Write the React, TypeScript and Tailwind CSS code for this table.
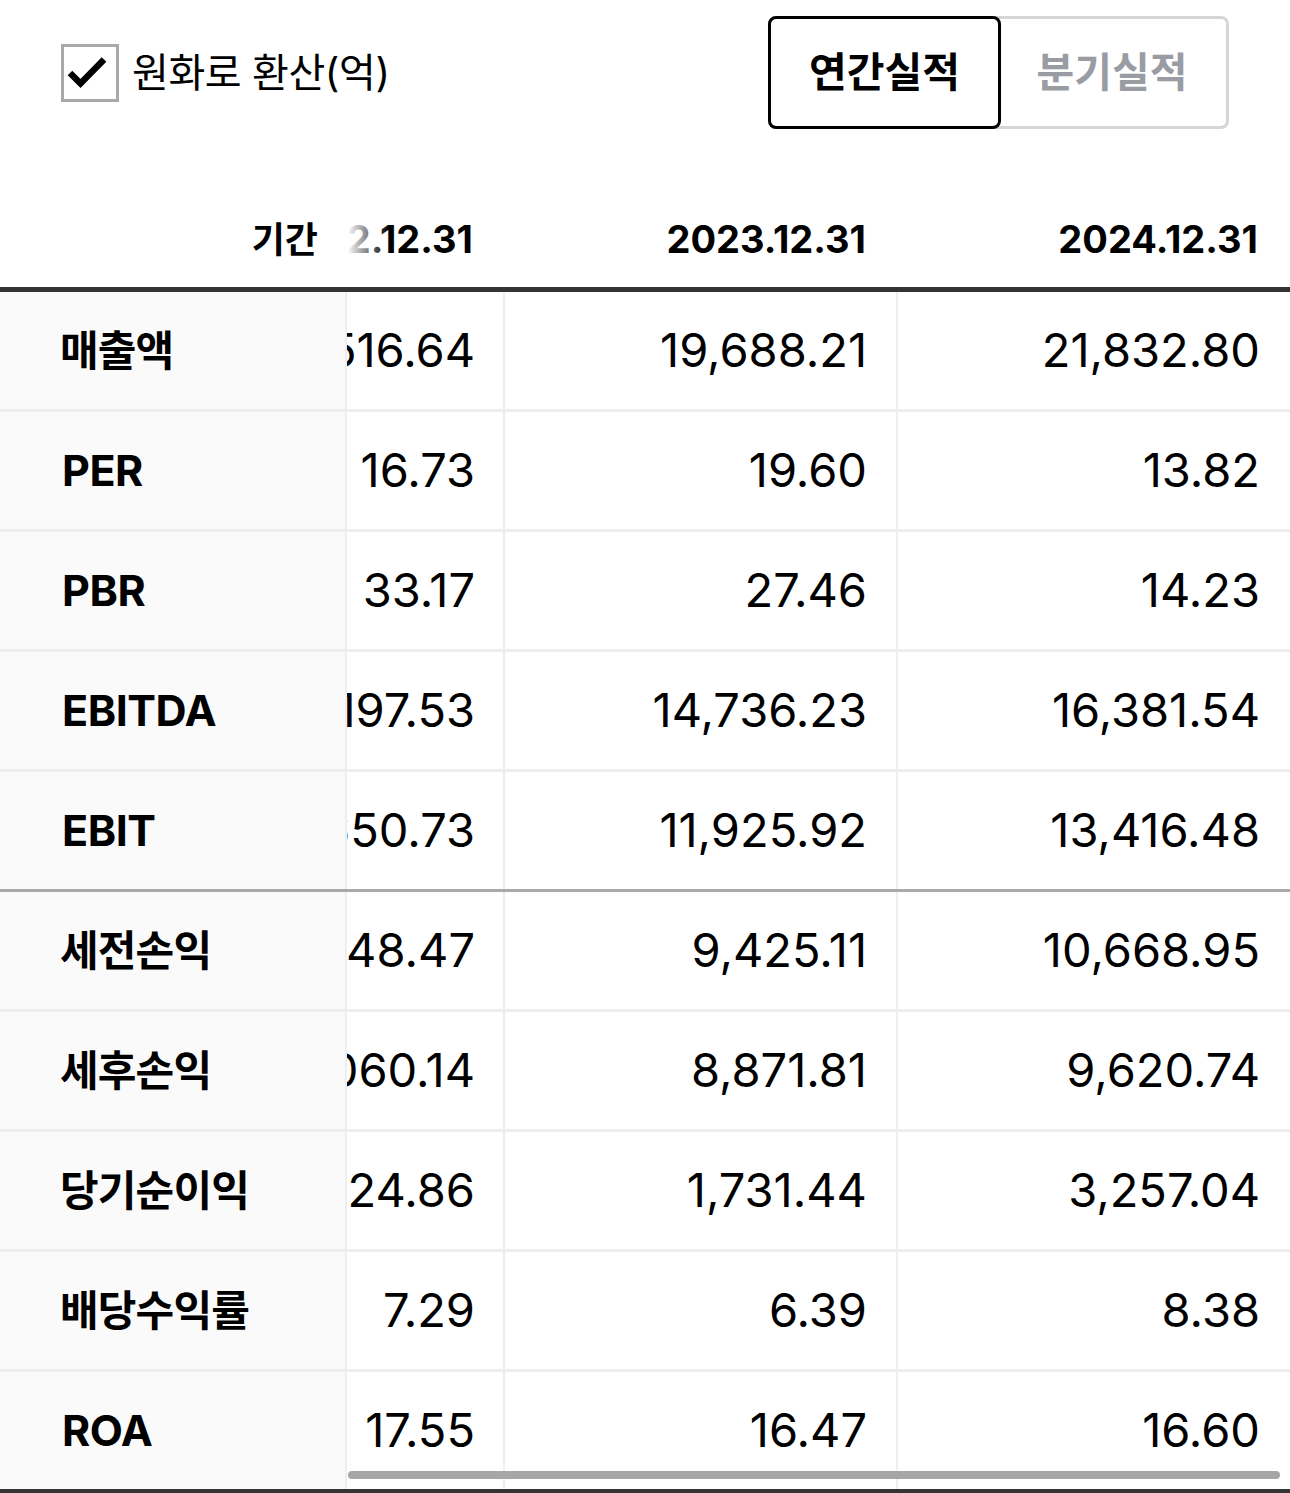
import { useState } from 'react';

const periods = ['2022.12.31', '2023.12.31', '2024.12.31'];

const rows = [
  { label: '매출액', values: ['18,516.64', '19,688.21', '21,832.80'] },
  { label: 'PER', values: ['16.73', '19.60', '13.82'] },
  { label: 'PBR', values: ['33.17', '27.46', '14.23'] },
  { label: 'EBITDA', values: ['13,197.53', '14,736.23', '16,381.54'] },
  { label: 'EBIT', values: ['10,650.73', '11,925.92', '13,416.48'] },
  { label: '세전손익', values: ['8,448.47', '9,425.11', '10,668.95'] },
  { label: '세후손익', values: ['8,060.14', '8,871.81', '9,620.74'] },
  { label: '당기순이익', values: ['1,224.86', '1,731.44', '3,257.04'] },
  { label: '배당수익률', values: ['7.29', '6.39', '8.38'] },
  { label: 'ROA', values: ['17.55', '16.47', '16.60'] },
];

const font = { fontFamily: 'Inter, "Noto Sans CJK KR", sans-serif' };

const valueCell = [
  'flex items-center justify-end overflow-hidden border-r-2 border-[#eeeeee] pr-[28px] text-[47px]',
  'flex items-center justify-end overflow-hidden border-r-2 border-[#eeeeee] pr-[29px] text-[47px]',
  'flex items-center justify-end overflow-hidden pr-[30px] text-[47px]',
];

export default function App() {
  const [krw, setKrw] = useState(true);
  const [mode, setMode] = useState<'year' | 'quarter'>('year');

  return (
    <div className="w-[1290px] bg-white text-black" style={font}>
      {/* Top controls */}
      <div className="flex items-center justify-between pt-4 pl-[61px] pr-[61px]">
        <label className="flex items-center gap-[13px] cursor-pointer" onClick={() => setKrw(!krw)}>
          <span className="flex h-[58px] w-[58px] items-center justify-center border-[3px] border-[#a9a9a9] bg-white">
            {krw && (
              <svg width="52" height="52" viewBox="0 0 52 52">
                <path d="M6 26 L16.5 36.5 L40 12.5" fill="none" stroke="#000" strokeWidth="6.5" />
              </svg>
            )}
          </span>
          <span className="text-[40px] leading-none tracking-[-0.01em]">원화로 환산(억)</span>
        </label>

        <div className="flex h-[113px] w-[461px] rounded-lg border-[3px] border-[#d6d6da]">
          <button
            onClick={() => setMode('year')}
            className={
              mode === 'year'
                ? '-m-[3px] flex w-[233px] items-center justify-center rounded-lg border-[3px] border-black text-[41px] font-semibold text-black'
                : 'flex w-[230px] items-center justify-center text-[41px] font-semibold text-[#9a9ca3]'
            }
          >
            연간실적
          </button>
          <button
            onClick={() => setMode('quarter')}
            className={
              mode === 'quarter'
                ? '-m-[3px] flex w-[233px] items-center justify-center rounded-lg border-[3px] border-black text-[41px] font-semibold text-black'
                : 'flex flex-1 items-center justify-center text-[41px] font-semibold text-[#9a9ca3]'
            }
          >
            분기실적
          </button>
        </div>
      </div>

      {/* Table */}
      <div className="relative mt-[58px]">
        <div className="grid h-[105px] grid-cols-[347px_158px_393px_392px] border-b-[5px] border-[#333333] pt-[5px]">
          <div className="flex items-center justify-end bg-white pr-[29px] text-[36px] font-bold">기간</div>
          {periods.map((p, i) => (
            <div key={p} className="relative flex items-center justify-end overflow-hidden pr-[32px] text-[38px] font-bold">
              <span className="whitespace-nowrap">{p}</span>
              {i === 0 && <div className="absolute inset-y-0 left-0 w-[42px] bg-gradient-to-r from-white to-transparent" />}
            </div>
          ))}
        </div>

        {rows.map((r, ri) => {
          const last = ri === rows.length - 1;
          const rowBorder = last
            ? 'h-[121px] border-b-4 border-[#333333]'
            : ri === 4
            ? 'h-[120px] border-b-[3px] border-[#aaaaaa]'
            : 'h-[120px] border-b-[3px] border-[#eeeeee]';
          const latin = /^[A-Z]+$/.test(r.label);
          return (
            <div key={r.label} className={'grid grid-cols-[347px_158px_393px_392px] ' + rowBorder}>
              <div
                className={
                  latin
                    ? 'flex items-center border-r-2 border-[#eeeeee] bg-[#fafafa] pl-[62px] text-[43px] font-bold tracking-[-0.01em]'
                    : 'flex items-center border-r-2 border-[#eeeeee] bg-[#fafafa] pl-[60px] text-[42px] font-bold tracking-[-0.02em]'
                }
              >
                {r.label}
              </div>
              {r.values.map((v, vi) => (
                <div key={vi} className={valueCell[vi]}>
                  <span className="whitespace-nowrap">{v}</span>
                </div>
              ))}
            </div>
          );
        })}

        {/* horizontal scrollbar thumb */}
        <div className="absolute bottom-[14px] left-[348px] right-[10px] h-[8px] rounded-full bg-[#a6a6a6]" />
      </div>
    </div>
  );
}
